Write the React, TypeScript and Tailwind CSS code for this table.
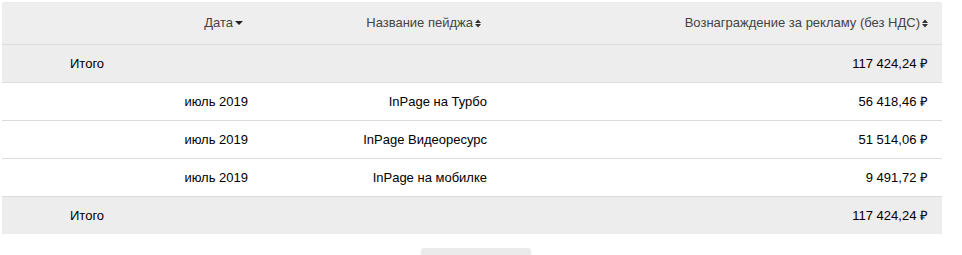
import React from 'react';

const ROWS = [
  { date: 'июль 2019', page: 'InPage на Турбо', sum: '56 418,46 ₽' },
  { date: 'июль 2019', page: 'InPage Видеоресурс', sum: '51 514,06 ₽' },
  { date: 'июль 2019', page: 'InPage на мобилке', sum: '9 491,72 ₽' },
];

const TOTAL = '117 424,24 ₽';

function SortDown() {
  return (
    <svg width="8" height="6" viewBox="0 0 8 6" className="ml-[2px] inline-block">
      <path d="M0 1h8L4 5z" fill="#222" />
    </svg>
  );
}

function SortBoth() {
  return (
    <svg width="6" height="9" viewBox="0 0 6 9" className="ml-[2px] inline-block">
      <path d="M0 4L3 0.5 6 4z M0 5l3 3.5L6 5z" fill="#333" />
    </svg>
  );
}

function TotalRow({ last }: { last?: boolean }) {
  return (
    <div
      className={`grid grid-cols-[258px_250px_1fr] items-center bg-[#ededed] text-[13px] text-black ${
        last ? 'h-[37px]' : 'h-[38px] border-b border-[#dcdcdc]'
      }`}
    >
      <div className="pl-[68px]">Итого</div>
      <div />
      <div className="pr-[14px] text-right">{TOTAL}</div>
    </div>
  );
}

export default function App() {
  return (
    <div
      className="h-[255px] w-[962px] overflow-hidden bg-white pl-[2px] pt-[2px]"
      style={{ fontFamily: '"Liberation Sans", Arial, sans-serif' }}
    >
      <div className="w-[940px]">
        {/* шапка */}
        <div className="grid h-[43px] grid-cols-[258px_250px_1fr] items-center border-b border-[#dcdcdc] bg-[#eeeeee] text-[13px] text-[#444]">
          <div className="flex items-center justify-end pr-[17px]">
            Дата
            <SortDown />
          </div>
          <div className="flex items-center justify-end pr-[29px]">
            Название пейджа
            <SortBoth />
          </div>
          <div className="flex items-center justify-end pr-[14px]">
            Вознаграждение за рекламу (без НДС)
            <SortBoth />
          </div>
        </div>

        <TotalRow />

        {ROWS.map((r, i) => (
          <div
            key={i}
            className="grid h-[38px] grid-cols-[258px_250px_1fr] items-center border-b border-[#dcdcdc] text-[13px] text-black"
          >
            <div className="pr-[12px] text-right">{r.date}</div>
            <div className="pr-[23px] text-right">{r.page}</div>
            <div className="pr-[14px] text-right">{r.sum}</div>
          </div>
        ))}

        <TotalRow last />
      </div>

      <div className="ml-[419px] mt-[14px] h-[10px] w-[110px] rounded-t-[3px] bg-[#ebebeb]" />
    </div>
  );
}
